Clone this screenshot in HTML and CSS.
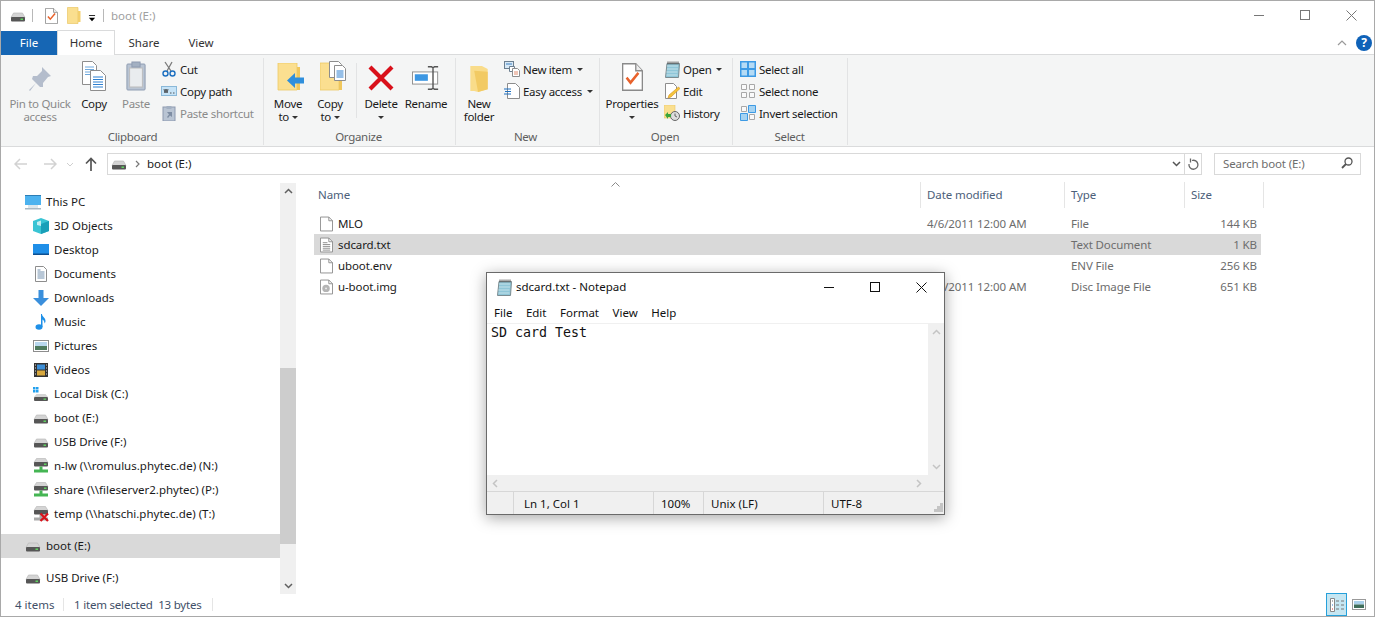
FILE: index.html
```html
<!DOCTYPE html>
<html lang="en">
<head>
  <meta charset="UTF-8" />
  <title>boot (E:)</title>
  <link rel="stylesheet" href="styles.css">
</head>
<body>
  <svg class="sprites" width="0" height="0">
    <defs>
      <symbol id="i-drive" viewBox="0 0 16 16">
        <path d="M3.500 5h9L15 9.500H1z" fill="#d4d4d4" stroke="#b4b4b4" stroke-width=".6"/>
        <rect x="1" y="9" width="14" height="4.500" rx="1" fill="#565656"/>
        <rect x="10.500" y="10.500" width="2.500" height="1.500" fill="#5fd35f"/>
      </symbol>
      <symbol id="i-netdrive" viewBox="0 0 16 16">
        <path d="M3.500 0.500h9L15 4.500H1z" fill="#d4d4d4" stroke="#b4b4b4" stroke-width=".6"/>
        <rect x="1" y="4" width="14" height="4.500" rx="1" fill="#565656"/>
        <rect x="11" y="5.500" width="2.500" height="1.500" fill="#5fd35f"/>
        <path d="M6.500 8.500h3v3h5.500v3H1v-3h5.500z" fill="#45b553"/>
      </symbol>
      <symbol id="i-netdrive-x" viewBox="0 0 16 16">
        <path d="M3.500 0.500h9L15 4.500H1z" fill="#d4d4d4" stroke="#b4b4b4" stroke-width=".6"/>
        <rect x="1" y="4" width="14" height="4.500" rx="1" fill="#565656"/>
        <path d="M6.500 8.500h3v3h5.500v3H1v-3h5.500z" fill="#a9a9a9"/>
        <path d="M7.500 7.500l7.500 7.500M15 7.500l-7.500 7.500" stroke="#d8131b" stroke-width="2.300"/>
      </symbol>
      <symbol id="i-checklist" viewBox="0 0 16 20">
        <path d="M.5.500h10l5 5v14H.5z" fill="#fff" stroke="#8a8a8a"/>
        <path d="M10.500.500v5h5" fill="#eee" stroke="#8a8a8a"/>
        <path d="M3.500 10.500l3 3.500 6-7" fill="none" stroke="#e8622c" stroke-width="1.900"/>
      </symbol>
      <symbol id="i-folder" viewBox="0 0 14 17">
        <path d="M.5.500h10.500v16H.5z" fill="#fadf8f" stroke="#e9c765" stroke-width=".7"/>
        <path d="M11 4h2.500v11H11z" fill="#f3cf6c"/>
      </symbol>
      <symbol id="i-file" viewBox="0 0 14 16">
        <path d="M.5.500h9l4 4v11H.5z" fill="#fff" stroke="#8d8d8d"/>
        <path d="M9.500.500v4h4" fill="none" stroke="#8d8d8d"/>
      </symbol>
      <symbol id="i-textfile" viewBox="0 0 14 16">
        <path d="M.5.500h9l4 4v11H.5z" fill="#fff" stroke="#8d8d8d"/>
        <path d="M9.500.500v4h4M3 5.500h5M3 7.500h8M3 9.500h8M3 11.500h8M3 13.500h8" fill="none" stroke="#8d8d8d"/>
      </symbol>
      <symbol id="i-imgfile" viewBox="0 0 14 16">
        <path d="M.5.500h9l4 4v11H.5z" fill="#fff" stroke="#8d8d8d"/>
        <path d="M9.500.500v4h4" fill="none" stroke="#8d8d8d"/>
        <circle cx="6.500" cy="9.500" r="4" fill="#b4b4b4"/>
        <circle cx="6.500" cy="9.500" r="1" fill="#eee"/>
      </symbol>
      <symbol id="i-pages" viewBox="0 0 24 30">
        <path d="M.5.500h10l4 4v19H.5z" fill="#fff" stroke="#8d8d8d"/>
        <path d="M3 6h9M3 8.500h9M3 11h9M3 13.500h9" stroke="#6fa8dc"/>
        <path d="M8.500 9.500h10l5 5v15h-15z" fill="#fff" stroke="#8d8d8d"/>
        <path d="M11 16h10M11 18.500h10M11 21h10M11 23.500h10M11 26h10" stroke="#2f80d0"/>
      </symbol>
      <symbol id="i-notebook" viewBox="0 0 16 17">
        <path d="M3 2.500h12.500l-1 14H1.500z" fill="#8fc6d8" stroke="#7b8b90"/>
        <path d="M3 5h11M3 8h11M2.500 11h11M2.500 14h11" stroke="#c5e2ea"/>
        <path d="M4 .5v3M6 .5v3M8 .5v3M10 .5v3M12 .5v3M14 .5v3" stroke="#555"/>
      </symbol>
    </defs>
  </svg>

  <div class="window">
    <header class="titlebar">
      <svg class="qa-drive" width="16" height="16"><use href="#i-drive"/></svg>
      <span class="qa-sep"></span>
      <svg class="qa-check" width="13" height="16"><use href="#i-checklist"/></svg>
      <svg class="qa-folder" width="14" height="17"><use href="#i-folder"/></svg>
      <svg class="qa-menu" width="8" height="7" viewBox="0 0 9 8"><path d="M1 .5h7" stroke="#000"/><path d="M1 3h7L4.500 7z" fill="#000"/></svg>
      <span class="qa-sep qa-sep-last"></span>
      <span class="title-text">boot (E:)</span>
      <div class="win-controls">
        <button class="win-btn"><svg width="10" height="10" viewBox="0 0 10 10"><path d="M0 5.500h10" stroke="#777"/></svg></button>
        <button class="win-btn"><svg width="10" height="10" viewBox="0 0 10 10"><rect x=".5" y=".5" width="9" height="9" fill="none" stroke="#777"/></svg></button>
        <button class="win-btn"><svg width="11" height="11" viewBox="0 0 11 11"><path d="M.5.500l10 10M10.500.500l-10 10" stroke="#777"/></svg></button>
      </div>
    </header>

    <nav class="tabs">
      <span class="tab tab-file">File</span>
      <span class="tab tab-home">Home</span>
      <span class="tab tab-share">Share</span>
      <span class="tab tab-view">View</span>
      <svg class="ribbon-toggle" width="10" height="6" viewBox="0 0 10 6"><path d="M1 5l4-4 4 4" fill="none" stroke="#9a9a9a" stroke-width="1.200"/></svg>
      <span class="help">?</span>
    </nav>

    <section class="ribbon">
      <div class="group group-clipboard">
        <div class="group-body">
          <div class="big big-pin disabled">
            <span class="big-icon"><svg width="24" height="26" viewBox="0 0 24 26"><path d="M14 1l9 9-3 1-5 6 0 4-3 0-4-4-6 8-1-1 7-7-4-4 1-3 4 0 5-5z" fill="#b4bdcc"/></svg></span>
            <span class="big-label">Pin to Quick<br>access</span>
          </div>
          <div class="big big-copy">
            <span class="big-icon"><svg width="24" height="30"><use href="#i-pages"/></svg></span>
            <span class="big-label">Copy</span>
          </div>
          <div class="big big-paste disabled">
            <span class="big-icon"><svg width="20" height="30" viewBox="0 0 22 30" preserveAspectRatio="none"><rect x="1" y="3" width="20" height="26" rx="1" fill="#b9c4d3" stroke="#8d9ab0"/><rect x="4" y="7" width="14" height="19" fill="#e9ecef" stroke="#bbb"/><rect x="6.500" y="1" width="9" height="5" fill="#a3b0c2" stroke="#8d9ab0"/></svg></span>
            <span class="big-label">Paste</span>
          </div>
          <div class="small-col col-clipboard">
            <div class="small">
              <svg width="16" height="16" viewBox="0 0 16 16"><path d="M4 1l6 9M11 1L6 10" stroke="#7b7b7b" stroke-width="1.300"/><circle cx="4.500" cy="12.500" r="2.500" fill="none" stroke="#1c6fc0" stroke-width="1.400"/><circle cx="11.500" cy="12.500" r="2.500" fill="none" stroke="#1c6fc0" stroke-width="1.400"/></svg>
              <span>Cut</span>
            </div>
            <div class="small">
              <svg width="16" height="16" viewBox="0 0 16 16"><rect x=".5" y="3.500" width="15" height="9" fill="#c6e3f7" stroke="#8ab8d8"/><path d="M3 6l1 4 1-4 1 4 1-4M9 10h1.500M12 10h1.500" fill="none" stroke="#333" stroke-width=".8"/></svg>
              <span>Copy path</span>
            </div>
            <div class="small disabled">
              <svg width="16" height="16" viewBox="0 0 16 16"><rect x="2" y="2" width="12" height="14" fill="#b9c4d3" stroke="#8d9ab0"/><rect x="5.500" y="1" width="5" height="3" fill="#a3b0c2"/><path d="M6 7h5v5l-2-1.500-2 2.500-1-1 2-2.500z" fill="#7e8da3"/></svg>
              <span>Paste shortcut</span>
            </div>
          </div>
        </div>
        <div class="group-label">Clipboard</div>
      </div>

      <div class="group group-organize">
        <div class="group-body">
          <div class="big big-move">
            <span class="big-icon"><svg width="28" height="28" viewBox="0 0 28 28"><path d="M1 0h19v27H1z" fill="#fbdf90" stroke="#eec966" stroke-width=".8"/><path d="M20 4h3v23h-3z" fill="#f0c75d"/><path d="M10 17.500L18 10v4.500h9v6h-9V25z" fill="#2f8fdc"/></svg></span>
            <span class="big-label">Move<br>to <i class="caret"></i></span>
          </div>
          <div class="big big-copyto">
            <span class="big-icon"><svg width="26" height="30" viewBox="0 0 26 30"><path d="M0 2h19v27H0z" fill="#fbdf90" stroke="#eec966" stroke-width=".8"/><path d="M19 6h3v23h-3z" fill="#f0c75d"/><path d="M9.500.500h9l3 3v13h-12z" fill="#fff" stroke="#8d8d8d"/><path d="M14.500 4.500h8l3 3v12h-11z" fill="#fff" stroke="#8d8d8d"/><path d="M16.500 10h7M16.500 12h7M16.500 14h7M16.500 16h7" stroke="#2f80d0"/></svg></span>
            <span class="big-label">Copy<br>to <i class="caret"></i></span>
          </div>
          <span class="group-sep"></span>
          <div class="big big-delete">
            <span class="big-icon"><svg width="26" height="26" viewBox="0 0 26 26"><path d="M2 2l22 22M24 2L2 24" stroke="#d9101a" stroke-width="4.200"/></svg></span>
            <span class="big-label">Delete<br><i class="caret"></i></span>
          </div>
          <div class="big big-rename">
            <span class="big-icon"><svg width="28" height="26" viewBox="0 0 30 26"><rect x=".5" y="6.500" width="27" height="13" fill="#fff" stroke="#8d8d8d"/><rect x="3" y="9" width="14" height="7" fill="#3c97e3"/><path d="M17 1h4l1.500 1 1.500-1h4M17 25h4l1.500-1 1.500 1h4M22.500 2v22" fill="none" stroke="#555" stroke-width="1.500"/></svg></span>
            <span class="big-label">Rename</span>
          </div>
        </div>
        <div class="group-label">Organize</div>
      </div>

      <div class="group group-new">
        <div class="group-body">
          <div class="big big-newfolder">
            <span class="big-icon"><svg width="19" height="27" viewBox="0 0 19 28"><path d="M0 0h12l6 3v21l-10 3-4-1H0z" fill="#f9dc8a"/><path d="M4 5l14 1v18l-10 3z" fill="#f2ca63"/></svg></span>
            <span class="big-label">New<br>folder</span>
          </div>
          <div class="small-col col-new">
            <div class="small">
              <svg width="16" height="16" viewBox="0 0 16 16"><rect x=".5" y=".5" width="9" height="7" fill="#d7e9f6" stroke="#6c7f90"/><path d="M2 3h6" stroke="#3c7fc0"/><path d="M5.500 5.500h5v5h-5z" fill="#fff" stroke="#6c7f90"/><path d="M8.500 7.500h5l2 2v6h-7z" fill="#fff" stroke="#8d8d8d"/><path d="M10 11h4M10 13h4" stroke="#e08a6c"/></svg>
              <span>New item</span><i class="caret"></i>
            </div>
            <div class="small">
              <svg width="16" height="16" viewBox="0 0 16 16"><path d="M3.500.500h8l4 4v11h-12z" fill="#fff" stroke="#8d8d8d"/><path d="M0 6h7M1 8.500h6M0 11h7" stroke="#1c6fc0"/></svg>
              <span>Easy access</span><i class="caret"></i>
            </div>
          </div>
        </div>
        <div class="group-label">New</div>
      </div>

      <div class="group group-open">
        <div class="group-body">
          <div class="big big-props">
            <span class="big-icon"><svg width="21" height="28" viewBox="0 0 16 20" preserveAspectRatio="none"><use href="#i-checklist"/></svg></span>
            <span class="big-label">Properties<br><i class="caret"></i></span>
          </div>
          <div class="small-col col-open">
            <div class="small">
              <svg width="16" height="17"><use href="#i-notebook"/></svg>
              <span>Open</span><i class="caret"></i>
            </div>
            <div class="small">
              <svg width="16" height="16" viewBox="0 0 16 16"><path d="M1.500.500h8l3 3v12h-11z" fill="#fff" stroke="#8d8d8d"/><path d="M14.500 4l1.500 1.500L7 14l-3 1 1-3z" fill="#f3c53c" stroke="#d6901e" stroke-width=".6"/></svg>
              <span>Edit</span>
            </div>
            <div class="small">
              <svg width="16" height="16" viewBox="0 0 16 16"><path d="M0 0h11v13H0z" fill="#fadf8f" stroke="#e9c765" stroke-width=".6"/><circle cx="11" cy="11" r="4.500" fill="#ddd" stroke="#666"/><path d="M11 8.500V11l2 1" fill="none" stroke="#444" stroke-width=".8"/><path d="M1 10l3-3v2h3v3H4v2z" fill="#3aa53a"/></svg>
              <span>History</span>
            </div>
          </div>
        </div>
        <div class="group-label">Open</div>
      </div>

      <div class="group group-select">
        <div class="group-body">
          <div class="small-col col-select">
            <div class="small">
              <svg width="16" height="16" viewBox="0 0 16 16"><rect width="16" height="16" fill="#3d9ae4"/><path d="M1.500 1.500h5.500v5.500H1.500zM9 1.500h5.500v5.500H9zM1.500 9h5.500v5.500H1.500zM9 9h5.500v5.500H9z" fill="#b5dbf5"/></svg>
              <span>Select all</span>
            </div>
            <div class="small">
              <svg width="16" height="16" viewBox="0 0 16 16"><path d="M1.500 1.500h5v5h-5zM9.500 1.500h5v5h-5zM1.500 9.500h5v5h-5zM9.500 9.500h5v5h-5z" fill="#fafafa" stroke="#a8a8a8"/></svg>
              <span>Select none</span>
            </div>
            <div class="small">
              <svg width="16" height="16" viewBox="0 0 16 16"><path d="M1.500 1.500h5v5h-5zM9.500 9.500h5v5h-5z" fill="#fafafa" stroke="#a8a8a8"/><path d="M8.500.5h7v7h-7zM.5 8.500h7v7h-7z" fill="#a5d3f2" stroke="#3d9ae4"/></svg>
              <span>Invert selection</span>
            </div>
          </div>
        </div>
        <div class="group-label">Select</div>
      </div>
    </section>

    <div class="addressbar">
      <div class="nav-buttons">
        <svg class="nav-back" width="14" height="12" viewBox="0 0 14 12"><path d="M6 1L1 6l5 5M1 6h12" fill="none" stroke="#d2d2d2" stroke-width="1.500"/></svg>
        <svg class="nav-forward" width="14" height="12" viewBox="0 0 14 12"><path d="M8 1l5 5-5 5M13 6H1" fill="none" stroke="#d2d2d2" stroke-width="1.500"/></svg>
        <svg class="nav-recent" width="8" height="5" viewBox="0 0 8 5"><path d="M1 1l3 3 3-3" fill="none" stroke="#cfcfcf"/></svg>
        <svg class="nav-up" width="12" height="14" viewBox="0 0 12 14"><path d="M1 6.500l5-5 5 5M6 1.500V14" fill="none" stroke="#555" stroke-width="1.700"/></svg>
      </div>
      <div class="address">
        <svg width="16" height="16"><use href="#i-drive"/></svg>
        <svg class="crumb" width="5" height="8" viewBox="0 0 5 8"><path d="M1 1l3 3-3 3" fill="none" stroke="#777" stroke-width="1.200"/></svg>
        <span class="crumb-text">boot (E:)</span>
        <svg class="addr-down" width="9" height="6" viewBox="0 0 9 6"><path d="M1 1l3.500 3.500L8 1" fill="none" stroke="#555" stroke-width="1.500"/></svg>
        <span class="addr-refresh"><svg width="12" height="13" viewBox="0 0 12 13"><path d="M5 2.500A4.500 4.500 0 1 1 2 6M3.500.500v4" fill="none" stroke="#666" stroke-width="1.300"/></svg></span>
      </div>
      <div class="search">
        <span>Search boot (E:)</span>
        <svg width="12" height="12" viewBox="0 0 12 12"><circle cx="7.500" cy="4.500" r="3.500" fill="none" stroke="#555" stroke-width="1.300"/><path d="M5 7l-4 4" stroke="#555" stroke-width="1.800"/></svg>
      </div>
    </div>

    <main class="content">
      <aside class="tree">
        <div class="tree-items">
          <div class="tree-row level-0"><svg width="16" height="16" viewBox="0 0 16 16"><rect y="1" width="16" height="10" fill="#4cb2ef"/><path d="M0 1h16v1H0z" fill="#2c7db5"/><path d="M0 14h16v1.500H0z" fill="#a8b8c4"/><path d="M3 11h10v3H3z" fill="#dce6ec"/></svg><span>This PC</span></div>
          <div class="tree-row"><svg width="16" height="16" viewBox="0 0 16 16"><path d="M8 0l8 3v10l-8 3-8-3V3z" fill="#39c4d4"/><path d="M8 6l8-3v10l-8 3z" fill="#1a9fb8"/><path d="M4 4l4-1.500V8L4 7z" fill="#c4eef2"/></svg><span>3D Objects</span></div>
          <div class="tree-row"><svg width="16" height="16" viewBox="0 0 16 16"><rect y="2" width="16" height="11" fill="#1f8fe8"/><path d="M0 11.500h16V13H0z" fill="#0d4f91"/></svg><span>Desktop</span></div>
          <div class="tree-row"><svg width="16" height="16" viewBox="0 0 14 16"><path d="M1.500.500h8l3 3v12h-11z" fill="#fff" stroke="#8d8d8d"/><path d="M3.500 4h3M3.500 6h7M3.500 8h7M3.500 10h7M3.500 12h7" stroke="#7290ae"/></svg><span>Documents</span></div>
          <div class="tree-row"><svg width="16" height="16" viewBox="0 0 16 16"><path d="M5.500 0h5v8H16l-8 8-8-8h5.500z" fill="#3a8fdc"/></svg><span>Downloads</span></div>
          <div class="tree-row"><svg width="16" height="16" viewBox="0 0 16 16"><ellipse cx="6" cy="13" rx="3.500" ry="2.700" fill="#1e90e8"/><path d="M8 13V0l1 0c0 3 3.500 3.500 3.500 7 0 1-.5 2-1 2.500 0-2-1-3.500-2-4V13z" fill="#1e90e8"/></svg><span>Music</span></div>
          <div class="tree-row"><svg width="16" height="16" viewBox="0 0 16 16"><rect x=".5" y="2.500" width="15" height="11" fill="#fff" stroke="#8d8d8d"/><rect x="2" y="4" width="12" height="4" fill="#b8d7ee"/><rect x="2" y="8" width="12" height="4" fill="#4e7a5e"/></svg><span>Pictures</span></div>
          <div class="tree-row"><svg width="16" height="16" viewBox="0 0 16 16"><rect x="1" y="1" width="14" height="14" fill="#333"/><rect x="4" y="2.500" width="8" height="5" fill="#3d8fd8"/><rect x="4" y="8.500" width="8" height="5" fill="#d8a83d"/><path d="M2 3h1M2 6h1M2 9h1M2 12h1M13 3h1M13 6h1M13 9h1M13 12h1" stroke="#ddd"/></svg><span>Videos</span></div>
          <div class="tree-row"><svg width="16" height="16" viewBox="0 0 16 16"><path d="M0 1h2.500v2.500H0zM3 1h2.500v2.500H3zM0 4h2.500v2.500H0zM3 4h2.500v2.500H3z" fill="#22a0ee"/><path d="M3.500 8h9L15 11H1z" fill="#d4d4d4"/><rect x="1" y="11" width="14" height="4" rx="1" fill="#565656"/><rect x="10.500" y="12.500" width="2.500" height="1.300" fill="#5fd35f"/></svg><span>Local Disk (C:)</span></div>
          <div class="tree-row"><svg width="16" height="16"><use href="#i-drive"/></svg><span>boot (E:)</span></div>
          <div class="tree-row"><svg width="16" height="16"><use href="#i-drive"/></svg><span>USB Drive (F:)</span></div>
          <div class="tree-row"><svg width="16" height="16"><use href="#i-netdrive"/></svg><span>n-lw (\\romulus.phytec.de) (N:)</span></div>
          <div class="tree-row"><svg width="16" height="16"><use href="#i-netdrive"/></svg><span>share (\\fileserver2.phytec) (P:)</span></div>
          <div class="tree-row"><svg width="16" height="16"><use href="#i-netdrive-x"/></svg><span>temp (\\hatschi.phytec.de) (T:)</span></div>
          <div class="tree-row level-0 tree-selected"><svg width="16" height="16"><use href="#i-drive"/></svg><span>boot (E:)</span></div>
          <div class="tree-row level-0 tree-last"><svg width="16" height="16"><use href="#i-drive"/></svg><span>USB Drive (F:)</span></div>
        </div>
        <div class="scrollbar">
          <svg class="sb-arrow" width="9" height="6" viewBox="0 0 9 6"><path d="M1 5l3.500-3.500L8 5" fill="none" stroke="#606060" stroke-width="1.500"/></svg>
          <div class="sb-track"><div class="sb-thumb"></div></div>
          <svg class="sb-arrow" width="9" height="6" viewBox="0 0 9 6"><path d="M1 1l3.500 3.500L8 1" fill="none" stroke="#606060" stroke-width="1.500"/></svg>
        </div>
      </aside>

      <section class="files">
        <svg class="sort-mark" width="9" height="5" viewBox="0 0 9 5"><path d="M.5 4.500l4-4 4 4" fill="none" stroke="#8a8a8a"/></svg>
        <div class="files-head">
          <span>Name</span><span>Date modified</span><span>Type</span><span>Size</span>
        </div>
        <div class="file-row">
          <span class="file-name"><svg width="13" height="16"><use href="#i-file"/></svg>MLO</span>
          <span class="muted">4/6/2011 12:00 AM</span><span class="muted">File</span><span class="muted size">144 KB</span>
        </div>
        <div class="file-row file-selected">
          <span class="file-name"><svg width="13" height="16"><use href="#i-textfile"/></svg>sdcard.txt</span>
          <span class="muted"></span><span class="muted">Text Document</span><span class="muted size">1 KB</span>
        </div>
        <div class="file-row">
          <span class="file-name"><svg width="13" height="16"><use href="#i-file"/></svg>uboot.env</span>
          <span class="muted"></span><span class="muted">ENV File</span><span class="muted size">256 KB</span>
        </div>
        <div class="file-row">
          <span class="file-name"><svg width="13" height="16"><use href="#i-imgfile"/></svg>u-boot.img</span>
          <span class="muted">4/6/2011 12:00 AM</span><span class="muted">Disc Image File</span><span class="muted size">651 KB</span>
        </div>
      </section>
    </main>

    <footer class="statusbar">
      <span class="st-count">4 items</span>
      <span class="st-selected">1 item selected&nbsp; 13 bytes</span>
      <div class="view-btns">
        <span class="view-btn view-active"><svg width="16" height="16" viewBox="0 0 16 16"><path d="M1.500 1.500h4v13h-4z" fill="#fff" stroke="#888"/><path d="M3 3.500h1v1H3z" fill="#666"/><path d="M3 7.500h1v1H3z" fill="#2f80d0"/><path d="M3 11.500h1v1H3z" fill="#d02f2f"/><path d="M7 4h3M12 4h3M7 8h3M12 8h3M7 12h3M12 12h3" stroke="#777"/></svg></span>
        <span class="view-btn view-plain"><svg width="14" height="11" viewBox="0 0 14 11"><rect x=".5" y=".5" width="13" height="10" fill="#fff" stroke="#999"/><rect x="2" y="2" width="10" height="3.500" fill="#a9d0ea"/><rect x="2" y="5.500" width="10" height="3.500" fill="#3f6e5a"/></svg></span>
      </div>
    </footer>

    <div class="notepad">
      <div class="np-title">
        <svg width="16" height="17"><use href="#i-notebook"/></svg>
        <span class="np-title-text">sdcard.txt - Notepad</span>
        <div class="np-controls">
          <button class="win-btn"><svg width="10" height="10" viewBox="0 0 10 10"><path d="M0 5.500h10" stroke="#111"/></svg></button>
          <button class="win-btn"><svg width="10" height="10" viewBox="0 0 10 10"><rect x=".5" y=".5" width="9" height="9" fill="none" stroke="#111"/></svg></button>
          <button class="win-btn"><svg width="11" height="11" viewBox="0 0 11 11"><path d="M.5.500l10 10M10.500.500l-10 10" stroke="#111"/></svg></button>
        </div>
      </div>
      <div class="np-menu">
        <span>File</span><span>Edit</span><span>Format</span><span>View</span><span>Help</span>
      </div>
      <div class="np-body">
        <div class="np-text">SD card Test</div>
        <div class="np-vscroll">
          <svg width="9" height="6" viewBox="0 0 9 6"><path d="M1 5l3.500-3.500L8 5" fill="none" stroke="#c4c4c4" stroke-width="1.500"/></svg>
          <svg width="9" height="6" viewBox="0 0 9 6"><path d="M1 1l3.500 3.500L8 1" fill="none" stroke="#c4c4c4" stroke-width="1.500"/></svg>
        </div>
      </div>
      <div class="np-hscroll">
        <svg width="6" height="9" viewBox="0 0 6 9"><path d="M5 1L1.500 4.500 5 8" fill="none" stroke="#c4c4c4" stroke-width="1.500"/></svg>
        <svg width="6" height="9" viewBox="0 0 6 9"><path d="M1 1l3.500 3.500L1 8" fill="none" stroke="#c4c4c4" stroke-width="1.500"/></svg>
      </div>
      <div class="np-status">
        <span class="np-cell np-cell-first"></span>
        <span class="np-cell np-cell-pos">Ln 1, Col 1</span>
        <span class="np-cell np-cell-zoom">100%</span>
        <span class="np-cell np-cell-eol">Unix (LF)</span>
        <span class="np-cell np-cell-enc">UTF-8</span>
        <svg class="np-grip" width="9" height="9" viewBox="0 0 9 9"><path d="M6 0h3v3H6zM3 3h3v3H3zM6 3h3v3H6zM0 6h3v3H0zM3 6h3v3H3zM6 6h3v3H6z" fill="#c4c4c4"/></svg>
      </div>
    </div>
  </div>
</body>
</html>
```

FILE: styles.css
```css
* {
  box-sizing: border-box;
}

html, body {
  margin: 0;
  height: 617px;
  overflow: hidden;
}

body {
  background: #fff;
  color: #1a1a1a;
  font-family: "Noto Sans", "Open Sans", sans-serif;
  font-size: 11.5px;
  line-height: 13px;
}

.sprites {
  position: absolute;
}

svg {
  display: block;
  flex: none;
}

.window {
  position: relative;
  width: 1375px;
  height: 617px;
  border: 1px solid #a9a9a9;
  display: flex;
  flex-direction: column;
}

/* title bar */

.titlebar {
  height: 30px;
  display: flex;
  align-items: center;
  padding-left: 9px;
}

.qa-sep {
  width: 1px;
  height: 13px;
  background: #b8b8b8;
  margin-left: 6px;
  margin-bottom: 2px;
}

.qa-check {
  margin-left: 12px;
  margin-bottom: 1px;
}

.qa-folder {
  margin-left: 9px;
  margin-bottom: 1px;
}

.qa-menu {
  margin-left: 7px;
  margin-top: 4px;
}

.qa-sep-last {
  margin-left: 7px;
}

.title-text {
  margin-left: 7px;
  margin-bottom: 2px;
  color: #a0a0a0;
}

.win-controls {
  margin-left: auto;
  align-self: flex-start;
  display: flex;
}

.win-btn {
  width: 46px;
  height: 28px;
  border: 0;
  padding: 0;
  background: none;
  display: flex;
  align-items: center;
  justify-content: center;
}

/* tabs */

.tabs {
  height: 24px;
  display: flex;
  align-items: center;
  border-bottom: 1px solid #dadbdc;
}

.tab {
  height: 24px;
  line-height: 24px;
  text-align: center;
  color: #333;
}

.tab-file {
  width: 56px;
  background: #1666b4;
  color: #fff;
}

.tab-home {
  width: 58px;
  height: 25px;
  background: #fff;
  border: 1px solid #dadbdc;
  border-bottom: 0;
  line-height: 23px;
}

.tab-share {
  width: 58px;
}

.tab-view {
  width: 56px;
}

.ribbon-toggle {
  margin-left: auto;
  margin-right: 9px;
}

.help {
  width: 16px;
  height: 16px;
  margin-right: 2px;
  border-radius: 50%;
  background: #0f62b8;
  color: #fff;
  font-weight: 700;
  font-size: 12px;
  line-height: 16px;
  text-align: center;
}

/* ribbon */

.ribbon {
  height: 92px;
  background: #f4f5f5;
  border-bottom: 1px solid #dadbdc;
  display: flex;
  padding-top: 3px;
  letter-spacing: -0.3px;
}

.group {
  display: flex;
  flex-direction: column;
  height: 87px;
  border-right: 1px solid #e2e3e4;
}

.group-clipboard { width: 263px; padding-left: 3px; }
.group-organize { width: 192px; padding-left: 4px; }
.group-new { width: 144px; padding-left: 4px; }
.group-open { width: 133px; padding-left: 4px; }
.group-select { width: 115px; padding-left: 5px; }

.group-body {
  height: 71px;
  display: flex;
}

.group-label {
  height: 16px;
  line-height: 16px;
  text-align: center;
  color: #5e5e5e;
}

.group-clipboard .group-label { margin-right: 2px; }
.group-organize .group-label { margin-right: 6px; }
.group-new .group-label { margin-right: 8px; }
.group-open .group-label { margin-right: 6px; }
.group-select .group-label { margin-right: 6px; }

.group-sep {
  width: 1px;
  height: 55px;
  margin: 5px 2px 0 4px;
  background: #e2e3e4;
}

.big {
  display: flex;
  flex-direction: column;
  align-items: center;
  text-align: center;
  white-space: nowrap;
}

.big-icon {
  height: 39px;
  padding-top: 3px;
  display: flex;
  align-items: flex-start;
}

.big-pin { width: 72px; }
.big-copy { width: 36px; }
.big-paste { width: 48px; }
.big-move { width: 40px; }
.big-copyto { width: 44px; }
.big-delete { width: 44px; }
.big-rename { width: 46px; }
.big-newfolder { width: 38px; }
.big-props { width: 56px; }

.big-pin .big-icon { padding-top: 8px; }
.big-delete .big-icon { padding-top: 7px; }
.big-rename .big-icon { padding-top: 7px; }
.big-move .big-icon { padding-top: 5px; margin-left: 6px; }
.big-copyto .big-icon { margin-left: 6px; }
.big-newfolder .big-icon { padding-top: 8px; }
.big-props .big-icon { padding-top: 5px; }

.disabled {
  color: #8a8a8a;
}

.small-col {
  display: flex;
  flex-direction: column;
}

.col-clipboard { margin-left: -1px; }
.col-new { margin-left: 4px; }
.col-open { margin-left: 2px; }

.small {
  height: 22px;
  padding-left: 2px;
  display: flex;
  align-items: center;
  gap: 3px;
  white-space: nowrap;
}

.caret {
  display: inline-block;
  width: 0;
  height: 0;
  border: 3px solid transparent;
  border-top: 3px solid #333;
  border-bottom: 0;
  vertical-align: 2px;
}

.small .caret {
  margin-left: 2px;
}

/* address bar */

.addressbar {
  height: 34px;
  display: flex;
  align-items: center;
}

.nav-buttons {
  width: 106px;
  display: flex;
  align-items: center;
}

.nav-back { margin-left: 13px; }
.nav-forward { margin-left: 15px; }
.nav-recent { margin-left: 9px; }
.nav-up { margin-left: 11px; }

.address {
  width: 1095px;
  height: 22px;
  border: 1px solid #d9d9d9;
  display: flex;
  align-items: center;
  padding-left: 3px;
}

.crumb {
  margin-left: 8px;
}

.crumb-text {
  margin-left: 7px;
  margin-bottom: 2px;
}

.addr-down {
  margin-left: auto;
  margin-right: 3px;
}

.addr-refresh {
  width: 17px;
  height: 20px;
  border-left: 1px solid #d9d9d9;
  display: flex;
  align-items: center;
  justify-content: center;
}

.search {
  width: 147px;
  height: 22px;
  margin-left: 12px;
  border: 1px solid #d9d9d9;
  padding: 0 7px 2px 8px;
  display: flex;
  align-items: center;
  justify-content: space-between;
  color: #6d6d6d;
  letter-spacing: -0.15px;
}

/* main area */

.content {
  flex: 1;
  min-height: 0;
  display: flex;
}

.tree {
  width: 295px;
  display: flex;
}

.tree-items {
  width: 279px;
  padding-top: 8px;
}

.tree-row {
  height: 24px;
  display: flex;
  align-items: center;
  gap: 5px;
  padding-left: 32px;
  white-space: nowrap;
}

.tree-row svg {
  margin-top: 2px;
}

.level-0 {
  padding-left: 24px;
}

.tree-selected {
  margin-top: 9px;
  padding-bottom: 2px;
  background: #d9d9d9;
}

.tree-last {
  margin-top: 7px;
}

.scrollbar {
  width: 16px;
  height: 411px;
  margin-top: 2px;
  background: #f0f0f0;
  display: flex;
  flex-direction: column;
  align-items: center;
  justify-content: space-between;
  padding: 5px 0;
}

.sb-track {
  flex: 1;
  width: 16px;
  margin: 5px 0;
  padding-top: 169px;
}

.sb-thumb {
  height: 176px;
  background: #cdcdcd;
}

.files {
  position: relative;
  flex: 1;
  padding: 1px 0 0 18px;
  letter-spacing: -0.1px;
}

.sort-mark {
  position: absolute;
  left: 315px;
  top: 1px;
}

.files-head {
  width: 950px;
  height: 26px;
  margin-bottom: 5px;
  display: grid;
  grid-template-columns: 607px 144px 120px 79px;
  color: #4c607a;
}

.files-head span {
  padding-left: 4px;
  line-height: 26px;
  border-right: 1px solid #e5e5e5;
}

.files-head span + span {
  padding-left: 6px;
}

.file-row {
  width: 947px;
  height: 21px;
  display: grid;
  grid-template-columns: 607px 144px 120px 76px;
  align-items: center;
}

.file-selected {
  background: #d9d9d9;
}

.file-name {
  display: flex;
  align-items: center;
  gap: 5px;
  padding-left: 6px;
}

.muted {
  padding-left: 6px;
  color: #6d6d6d;
}

.size {
  padding: 0 4px 0 0;
  text-align: right;
}

/* status bar */

.statusbar {
  height: 23px;
  display: flex;
  align-items: center;
  color: #3f4f68;
}

.st-count {
  width: 63px;
  padding-left: 14px;
  border-right: 1px solid #e5e5e5;
}

.st-selected {
  width: 149px;
  padding-left: 10px;
  border-right: 1px solid #e5e5e5;
  white-space: nowrap;
  letter-spacing: -0.2px;
}

.view-btns {
  margin-left: auto;
  margin-right: 8px;
  display: flex;
  align-items: center;
  gap: 5px;
}

.view-btn {
  height: 23px;
  display: flex;
  align-items: center;
  justify-content: center;
}

.view-plain {
  width: 14px;
}

.view-active {
  width: 21px;
  background: #c5e6f2;
  border: 1px solid #26a0da;
}

/* notepad */

.notepad {
  position: absolute;
  left: 485px;
  top: 271px;
  width: 459px;
  height: 243px;
  background: #fff;
  border: 1px solid #6a6a6a;
  box-shadow: 0 3px 14px rgba(0, 0, 0, 0.35);
  display: flex;
  flex-direction: column;
  color: #111;
}

.np-title {
  height: 28px;
  display: flex;
  align-items: center;
  padding-left: 9px;
}

.np-title-text {
  margin-left: 4px;
  margin-bottom: 2px;
}

.np-controls {
  margin-left: auto;
  display: flex;
}

.np-menu {
  height: 22px;
  display: flex;
  align-items: center;
  gap: 13.5px;
  padding-left: 7px;
}

.np-body {
  flex: 1;
  min-height: 0;
  display: flex;
  border-top: 1px solid #f0f0f0;
}

.np-text {
  flex: 1;
  padding: 1px 0 0 4px;
  font-family: "DejaVu Sans Mono", monospace;
  font-size: 13.3px;
  line-height: 16px;
}

.np-vscroll {
  width: 16px;
  background: #f0f0f0;
  display: flex;
  flex-direction: column;
  align-items: center;
  justify-content: space-between;
  padding: 5px 0;
}

.np-hscroll {
  height: 16px;
  background: #f0f0f0;
  display: flex;
  align-items: center;
  justify-content: space-between;
  padding: 0 22px 0 5px;
}

.np-status {
  height: 23px;
  background: #f0f0f0;
  border-top: 1px solid #d7d7d7;
  display: flex;
  align-items: center;
}

.np-cell {
  height: 22px;
  line-height: 23px;
  padding-left: 10px;
  border-left: 1px solid #d7d7d7;
}

.np-cell-first { width: 26px; border-left: 0; }
.np-cell-pos { width: 140px; }
.np-cell-zoom { width: 50px; padding-left: 7px; }
.np-cell-eol { width: 120px; padding-left: 7px; }
.np-cell-enc { padding-left: 7px; }

.np-grip {
  margin: 9px 1px 0 auto;
}
```
